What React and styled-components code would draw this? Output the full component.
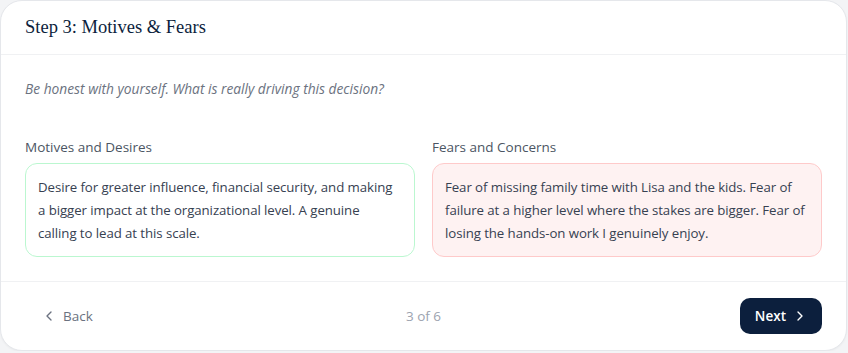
import React from 'react';
import styled, { createGlobalStyle } from 'styled-components';
import { ChevronLeft, ChevronRight } from 'lucide-react';

const GlobalStyle = createGlobalStyle`
  * { box-sizing: border-box; }
  body {
    margin: 0;
    background: #f3f4f6;
    font-family: "Open Sans", "Noto Sans", sans-serif;
  }
`;

const Card = styled.div`
  width: 847px;
  height: 351px;
  background: #ffffff;
  border: 1px solid #e5e7eb;
  border-radius: 22px;
  box-shadow: 0 1px 2px rgba(0,0,0,0.04);
  display: flex;
  flex-direction: column;
  overflow: hidden;
`;

const Header = styled.header`
  height: 55px;
  padding: 0 24px;
  display: flex;
  align-items: center;
  border-bottom: 1px solid #f0f1f3;
`;

const Title = styled.h2`
  margin: 0;
  font-family: "Liberation Serif", "DejaVu Serif", serif;
  font-weight: normal;
  font-size: 18.5px;
  color: #0c1e3c;
`;

const Body = styled.section`
  flex: 1;
  padding: 24px;
`;

const Intro = styled.p`
  margin: 0 0 38px;
  font-size: 13.75px;
  line-height: 20px;
  font-style: italic;
  color: #6b7280;
`;

const Columns = styled.div`
  display: grid;
  grid-template-columns: 1fr 1fr;
  gap: 17px;
`;

const Field = styled.div`
  display: flex;
  flex-direction: column;
`;

const Label = styled.label`
  font-size: 13.5px;
  line-height: 20px;
  color: #4b5563;
  margin-bottom: 6px;
`;

const Note = styled.div`
  border: 1px solid ${({ tone }) => (tone === 'fear' ? '#fecaca' : '#bbf7d0')};
  background: ${({ tone }) => (tone === 'fear' ? '#fef2f2' : '#ffffff')};
  border-radius: 12px;
  padding: 12px 15px 12px 12px;
  font-size: 13.25px;
  letter-spacing: -0.08px;
  line-height: 22.75px;
  color: #374151;
`;

const Footer = styled.footer`
  height: 70px;
  border-top: 1px solid #f0f1f3;
  padding: 0 24px;
  display: grid;
  grid-template-columns: 1fr auto 1fr;
  align-items: center;
`;

const BackButton = styled.button`
  justify-self: start;
  display: flex;
  align-items: center;
  gap: 6px;
  padding: 8px 16px;
  border: none;
  background: transparent;
  font-family: inherit;
  font-size: 13.5px;
  color: #6b7280;
`;

const Counter = styled.span`
  font-size: 13.5px;
  color: #9ca3af;
`;

const NextButton = styled.button`
  justify-self: end;
  display: flex;
  align-items: center;
  gap: 6px;
  height: 36px;
  padding: 0 14px 0 15px;
  border: none;
  border-radius: 10px;
  background: #0c1f3d;
  color: #ffffff;
  font-family: inherit;
  font-size: 13.5px;
  font-weight: 600;
`;

export default function App() {
  return (
    <>
      <GlobalStyle />
      <Card>
        <Header>
          <Title>Step 3: Motives &amp; Fears</Title>
        </Header>
        <Body>
          <Intro>Be honest with yourself. What is really driving this decision?</Intro>
          <Columns>
            <Field>
              <Label>Motives and Desires</Label>
              <Note tone="motive">
                Desire for greater influence, financial security, and making a bigger impact at the organizational level. A genuine calling to lead at this scale.
              </Note>
            </Field>
            <Field>
              <Label>Fears and Concerns</Label>
              <Note tone="fear">
                Fear of missing family time with Lisa and the kids. Fear of failure at a higher level where the stakes are bigger. Fear of losing the hands-on work I genuinely enjoy.
              </Note>
            </Field>
          </Columns>
        </Body>
        <Footer>
          <BackButton>
            <ChevronLeft size={16} strokeWidth={2} />
            Back
          </BackButton>
          <Counter>3 of 6</Counter>
          <NextButton>
            Next
            <ChevronRight size={16} strokeWidth={2} />
          </NextButton>
        </Footer>
      </Card>
    </>
  );
}
